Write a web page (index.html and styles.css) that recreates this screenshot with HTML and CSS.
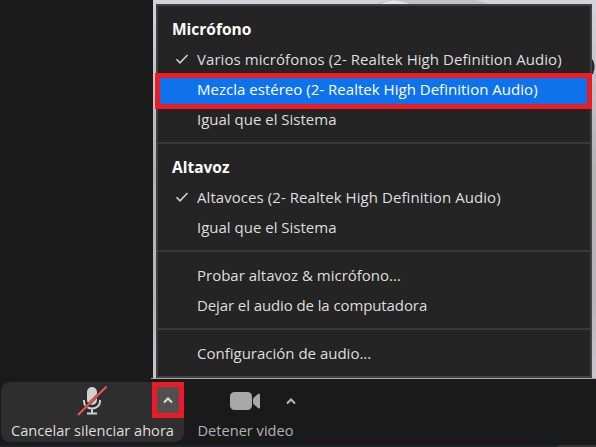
FILE: index.html
```html
<!DOCTYPE html>
<html lang="es">
<head>
<meta charset="utf-8">
<title>Audio</title>
<link rel="stylesheet" href="styles.css">
</head>
<body>
<main class="stage">
  <div class="side"></div>
  <div class="video">
    <svg class="backdrop" width="443" height="379" viewBox="0 0 443 379" aria-hidden="true">
      <defs><linearGradient id="g" x1="0" y1="0" x2="0" y2="1"><stop offset="0" stop-color="#d4d3d9"/><stop offset=".2" stop-color="#c4c3c7"/><stop offset=".45" stop-color="#b3b2b3"/><stop offset=".8" stop-color="#b8b6b8"/><stop offset="1" stop-color="#c8c5ce"/></linearGradient></defs>
      <path fill="url(#g)" d="M0 0h443v379H0z"/>
      <path fill="#c2c1c7" d="M224 4q10-5 22-4h74q10 1 15 4z"/>
      <path fill="#e6e5ea" d="M228 4q12-7 28 0z"/>
      <ellipse cx="437" cy="67" rx="4.500" ry="9" fill="#29282b"/>
    </svg>
    <div class="menu">
      <section class="group">
        <h2 class="title">Micrófono</h2>
        <div class="item wide"><svg class="check" width="14" height="12" viewBox="0 0 14 12"><path d="M1.500 6.200 5 9.800 12.500 2"/></svg><span>Varios micrófonos (2- Realtek High Definition Audio)</span></div>
        <div class="item selected"><span>Mezcla estéreo (2- Realtek High Definition Audio)</span></div>
        <div class="item"><span>Igual que el Sistema</span></div>
      </section>
      <section class="group">
        <h2 class="title">Altavoz</h2>
        <div class="item wide"><svg class="check" width="14" height="12" viewBox="0 0 14 12"><path d="M1.500 6.200 5 9.800 12.500 2"/></svg><span>Altavoces (2- Realtek High Definition Audio)</span></div>
        <div class="item"><span>Igual que el Sistema</span></div>
      </section>
      <section class="group">
        <div class="item"><span>Probar altavoz &amp; micrófono...</span></div>
        <div class="item tight"><span>Dejar el audio de la computadora</span></div>
      </section>
      <section class="group">
        <div class="item"><span>Configuración de audio...</span></div>
      </section>
    </div>
  </div>
</main>
<footer class="toolbar">
  <div class="button mute">
    <svg class="mic" width="32" height="32" viewBox="0 0 32 32">
      <rect x="11" y="3" width="10" height="18" rx="5" fill="#d0d0d0"/>
      <path d="M8 16v1.500a8 7 0 0 0 16 0V16M16 24.500V29M11 29.500h10" fill="none" stroke="#d0d0d0" stroke-width="2"/>
      <path d="M2 31 30.500 2.500" stroke="#2e2e2e" stroke-width="3"/>
      <path d="M2 31 30.500 2.500" stroke="#ef5551" stroke-width="2"/>
    </svg>
    <div class="arrow"><svg width="10" height="7" viewBox="0 0 10 7"><path d="M1 5.500 5 1.500 9 5.500"/></svg></div>
    <span class="label">Cancelar silenciar ahora</span>
  </div>
  <div class="button camera">
    <div class="icons">
      <svg width="30" height="18" viewBox="0 0 30 18" fill="#a8a8a8"><rect width="22" height="18" rx="4.500"/><path d="M23 7.500Q23 6 24.500 5L28 2Q30 .5 30 3v12q0 2.500-2 1L24.500 13Q23 12 23 10.500z"/></svg>
      <svg class="caret" width="10" height="7" viewBox="0 0 10 7"><path d="M1 5.500 5 1.500 9 5.500"/></svg>
    </div>
    <span class="label">Detener video</span>
  </div>
  <div class="edge"></div>
</footer>
</body>
</html>
```
FILE: styles.css
```css
*, *::before, *::after { box-sizing: border-box; }
body { margin: 0; width: 596px; height: 447px; overflow: hidden; background: #1a1a1a; color: #dedede; font: 15px "Open Sans", "Noto Sans", sans-serif; }
.stage { display: grid; grid-template-columns: 153px 443px; height: 379px; }
.video { position: relative; padding: 4px 4px 1px 3px; }
.video::after { content: ""; position: absolute; left: -2px; right: 0; bottom: 0; height: 1px; background: #aaa8ae; }
.backdrop { position: absolute; left: 0; top: 0; }
.menu { position: relative; height: 374px; width: 436px; border: 2px solid #414141; background: #242424; }
.group { padding: 9px 0 7px; }
.group + .group { border-top: 2px solid #393939; }
.title, .item { height: 30px; line-height: 28px; margin: 0; white-space: nowrap; }
.title { padding-left: 14px; font-size: 15.5px; font-weight: 700; color: #fff; }
.item { position: relative; padding-left: 39px; }
.wide { letter-spacing: .065px; }
.tight { letter-spacing: -.1px; }
.check { position: absolute; left: 17px; top: 8px; }
.check path { fill: none; stroke: #d0d0d0; stroke-width: 1.6; }
.selected { color: #fff; letter-spacing: .02px; }
.selected::before { content: ""; position: absolute; left: -3px; top: -2px; width: 437px; height: 36px; border: 5px solid #ed1c24; background: #0e72ed; }
.selected span { position: relative; }
.toolbar { position: relative; display: flex; height: 68px; padding: 3px 0 5px 1px; }
.button { position: relative; height: 60px; display: flex; flex-direction: column; align-items: center; justify-content: flex-end; }
.mute { width: 183px; border-radius: 9px; background: #2e2e2e; }
.mic { position: absolute; left: 75px; top: 2px; }
.arrow { position: absolute; right: 0; top: 0; width: 32px; height: 36px; border: 5px solid #ed1c24; background: #505050; display: grid; place-items: center; }
.arrow path, .caret path { fill: none; stroke: #dcdcdc; stroke-width: 2; }
.caret path { stroke: #b8b8b8; }
.label { height: 22px; line-height: 20px; font-size: 14.6px; white-space: nowrap; }
.camera { width: 123px; color: #b2b2b2; }
.icons { display: flex; align-items: center; gap: 26px; padding-left: 35px; height: 18px; margin-bottom: 10px; }
.edge { position: absolute; left: 0; right: 0; bottom: 0; height: 2px; background: linear-gradient(to right, #1e2327 558px, #343434 558px); }
```
